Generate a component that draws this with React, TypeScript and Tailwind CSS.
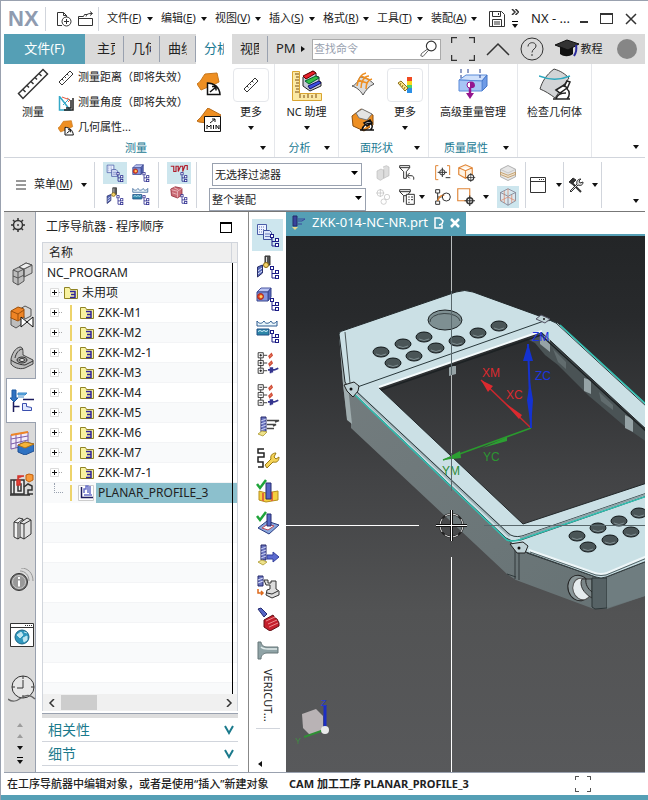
import type { ReactNode } from "react";

type IconProps = { className?: string };

const menus = [
  { label: "文件", hotkey: "F" },
  { label: "编辑", hotkey: "E" },
  { label: "视图", hotkey: "V" },
  { label: "插入", hotkey: "S" },
  { label: "格式", hotkey: "R" },
  { label: "工具", hotkey: "T" },
  { label: "装配", hotkey: "A" },
];

const tabs = ["主页", "几何", "曲线", "分析", "视图"];

const operations = ["ZKK-M1", "ZKK-M2", "ZKK-M2-1", "ZKK-M3", "ZKK-M4", "ZKK-M5", "ZKK-M6", "ZKK-M7", "ZKK-M7-1"];

function Svg({ className = "h-6 w-6", box = "0 0 24 24", children }: IconProps & { box?: string; children: ReactNode }) {
  return (
    <svg viewBox={box} className={`shrink-0 ${className}`} fill="none" stroke="#333" aria-hidden="true">
      {children}
    </svg>
  );
}

function Caret({ className = "" }: IconProps) {
  return (
    <svg viewBox="0 0 6 4" className={`h-1 w-1.5 shrink-0 ${className}`} fill="#111" aria-hidden="true">
      <path d="M0 0h6L3 4z" />
    </svg>
  );
}

// Little hierarchy mark that sits in the corner of all the navigator view icons
function TreeMark({ x = 14, y = 11 }: { x?: number; y?: number }) {
  return (
    <g transform={`translate(${x} ${y})`} stroke="#1c1c86" fill="#fff">
      <path d="M2 4v8h4M2 7.500h4" fill="none" />
      <rect x=".5" y=".5" width="3" height="3" />
      <rect x="5.500" y="4.500" width="3" height="3" />
      <rect x="5.500" y="9.500" width="3" height="3" />
    </g>
  );
}

function ProgramViewIcon({ className }: IconProps) {
  return (
    <Svg className={className}>
      <path d="M1.500 1.500h9v10h-9z" fill="#eef3ff" stroke="#4a5da8" />
      <path d="M3 4h6M3 6.500h6M3 9h6" stroke="#6b7cbf" strokeDasharray="1 1" />
      <path d="M7.500 7.500h6l2 2v7h-8z" fill="#dfe8fb" stroke="#3f519c" />
      <path d="M9 11h5M9 13.500h5" stroke="#6b7cbf" />
      <TreeMark />
    </Svg>
  );
}

function ToolViewIcon({ className }: IconProps) {
  return (
    <Svg className={className}>
      <path d="M9 1h5v9H9z" fill="#555" />
      <path d="M10.500 2v7" stroke="#ddd" />
      <circle cx="10" cy="10" r="2.500" fill="#f4d36b" stroke="#8a6a10" />
      <path d="M1.500 12l5-2v8l-5 4z" fill="#5668b8" stroke="#2a2f66" />
      <path d="M2 16l4-3M2 19l4-3" stroke="#dfe4fa" />
      <TreeMark />
    </Svg>
  );
}

function GeometryViewIcon({ className }: IconProps) {
  return (
    <Svg className={className}>
      <path d="M1 5l4-4h10l-3 4z" fill="#b9c3f2" stroke="#4a56a0" />
      <path d="M12 5l3-4v9l-3 4z" fill="#5767b8" stroke="#3b478e" />
      <path d="M1 5h11v9H1z" fill="#8695dc" stroke="#3b478e" />
      <circle cx="4.500" cy="9.500" r="3" fill="#e2452d" stroke="#a82817" />
      <circle cx="5" cy="9.500" r="1.500" fill="#ffd25a" stroke="none" />
      <TreeMark />
    </Svg>
  );
}

function MethodViewIcon({ className }: IconProps) {
  return (
    <Svg className={className}>
      <path d="M1 2v5h20V2c-2 3-5 3-6 0-2 3-6 3-7 0-2 3-5 3-7 0z" fill="#eaf6fb" stroke="#2c5b90" />
      <path d="M1 10h12v6H1z" fill="#2e87a8" stroke="#1e4f86" />
      <path d="M2 12.500l2-1 2 1 2-1 2 1 2-1" stroke="#d8f3ff" />
      <TreeMark />
    </Svg>
  );
}

function ExpandIcon({ minus }: { minus?: boolean }) {
  return (
    <Svg className="h-6 w-6" box="2 0 28 28">
      {[2, 11, 20].map((y) => (
        <g key={y}>
          <path d={`M4.500 ${y}h6v6h-6z`} fill="#fff" stroke="#222" />
          <path d={minus ? `M6 ${y + 3}h3` : `M6 ${y + 3}h3M7.500 ${y + 1.5}v3`} stroke="#111" />
          <path d={`M11 ${y + 3}h4`} stroke="#222" />
        </g>
      ))}
      <path d="M7.500 8v3M7.500 17v3" stroke="#222" />
      <path d="M17 6l3-3 1 2-3 3zM17 15l3-3 1 2-3 3z" fill="#f2a072" stroke="#d04c38" strokeWidth="1.500" />
      <path d="M16 22h8M19 19v7M21 19v6M24 22l4-2" stroke="#34348e" strokeWidth="2" />
    </Svg>
  );
}

function CutterIcon({ extra }: { extra?: ReactNode }) {
  return (
    <Svg>
      <path d="M5 2h5v15H5z" fill="#6a74bf" stroke="#25296b" />
      <path d="M5 6l5-2M5 9l5-2M5 12l5-2M5 15l5-2" stroke="#c9cff2" />
      {extra}
    </Svg>
  );
}

function WrenchRouteIcon() {
  return (
    <Svg>
      <path d="M8 2H2v4h6v4H2v5h5v5H2" stroke="#222" strokeWidth="1.500" />
      <path d="M9 18l6-6c-1-3 1-6 5-6l-2 4 2 2 3-2c0 4-2 6-6 5l-6 6z" fill="#f5d358" stroke="#9a7b13" />
    </Svg>
  );
}

function VerifyIcon({ block }: { block?: boolean }) {
  return (
    <Svg>
      {block ? (
        <g>
          <path d="M3 12l7 2 12-2v9l-12 2-7-2z" fill="#f4cf3f" stroke="#b78f1c" />
          <path d="M7 14v8M16 13v9" stroke="#e2693a" strokeWidth="2" />
          <path d="M10 4h5v16h-5z" fill="#5666c2" stroke="#262c70" />
        </g>
      ) : (
        <g>
          <path d="M2 17l9-7 12 4-10 9z" fill="#89a7dc" stroke="#2c3c83" />
          <path d="M6 17l6-4 6 2-6 4z" fill="#fff" stroke="#bf4b57" />
          <path d="M11 3h4v12h-4z" fill="#5666c2" stroke="#262c70" />
        </g>
      )}
      <path d="M1 5l3 4 6-8" stroke="#1fa43a" strokeWidth="2.500" />
    </Svg>
  );
}

function MachineIcon() {
  return (
    <Svg>
      <path d="M2 1h5v10H2z" fill="#6a74bf" stroke="#25296b" />
      <path d="M2 5l5-2M2 8l5-2" stroke="#dfe3fa" />
      <path d="M8 5h4v3h3V6h5v8l3 2v4l-7 3-6-3 1-5 3-1v-4h-4z" fill="#ddd" stroke="#333" />
      <path d="M11 18l5 1 6-3" />
      <path d="M2 14v4h5M5 16l2 2-2 2" stroke="#dd6a1c" strokeWidth="1.500" />
    </Svg>
  );
}

function PostIcon() {
  return (
    <Svg>
      <path d="M2 2l3-1 6 6-3 3z" fill="#5565c4" stroke="#262c70" />
      <path d="M8 13l9-5 2 3 2 1 2 4v3l-9 5-6-4z" fill="#c51f2b" stroke="#601016" />
      <path d="M10 14l9-4M12 17l9-4M13 20l9-4" stroke="#ee8a8f" />
    </Svg>
  );
}

function HolderIcon() {
  return (
    <Svg>
      <path d="M2 3h3c0 3 3 5 6 5h11v6H11c-3 0-6 2-6 6H2z" fill="#8fa3a6" stroke="#667678" />
      <path d="M5 8c2 2 4 2 7 2h9" stroke="#e2ecec" strokeWidth="1.500" />
    </Svg>
  );
}

function Ruler({ className }: IconProps) {
  return (
    <Svg className={className} box="0 0 32 32">
      <path d="M1.500 25.500L26 1.500l4.500 4.500L6 30.500z" fill="#fff" strokeWidth="1.500" />
      <path d="M6 21.500l2.500 2.500M10 17.500l2 2M14 13.500l2.500 2.500M18 9.500l2 2M22 5.500l2.500 2.500" strokeWidth="1.500" />
    </Svg>
  );
}

function SmallRuler() {
  return (
    <Svg className="h-4 w-4" box="0 0 16 16">
      <path d="M1 12L12 1l3 3L4 15z" fill="#fff" />
      <path d="M4 9l1.500 1.500M6.500 6.500L8 8M9 4l1.500 1.500" />
    </Svg>
  );
}

function AngleIcon() {
  return (
    <Svg className="h-4 w-4" box="0 0 16 16">
      <path d="M1.500 1v14H12L2 2" stroke="#35a9c8" strokeWidth="1.500" />
      <path d="M15 3v12H6M13 5v8H8" stroke="#222" strokeWidth="1.500" />
      <path d="M4 2l8 3M9 3l3 2-2 2" stroke="#e15b42" />
      <path d="M5 10l6-6" stroke="#35a9c8" />
    </Svg>
  );
}

function SurfaceArcIcon({ className, min }: IconProps & { min?: boolean }) {
  return (
    <Svg className={className}>
      {min ? (
        <g>
          <path d="M0 13C5 9 8 3 11 0l13 7-5 9L2 14z" fill="#ee8f22" stroke="#b86a17" />
          <path d="M7.500 8.500h16v15h-16z" fill="#fff" stroke="#111" />
          <path d="M13 15l5-4M15 11h3v3" stroke="#111" />
          <path d="M10 21v-4l2 2 2-2v4M16.500 17v4M19 21v-4l3 4v-4" stroke="#111" />
        </g>
      ) : (
        <g>
          <path d="M0 12C4 10 6 4 8 2l12-1 2 9-4 2-14 6z" fill="#ee8f22" stroke="#c6771d" />
          <path d="M10.500 22.500V11c6 0 12 4 12.500 11.500z" fill="#fff" stroke="#111" strokeWidth="1.500" />
          <path d="M13 20l6-5M15 14.500h4v4" stroke="#111" strokeWidth="1.500" />
        </g>
      )}
    </Svg>
  );
}

function NcAssistantIcon() {
  return (
    <Svg className="h-8 w-8" box="0 0 32 32">
      <path d="M1.500 1.500h7v22h22v7h-29z" fill="#fbe9a4" stroke="#d9a531" />
      <path d="M4 4h4M5 7h3M4 10h4M5 13h3M4 16h4M5 19h3M4 22h4M9 28v-4M13 28v-3M17 28v-4M21 28v-3M25 28v-4" stroke="#7b4a12" />
      <path d="M12 7l10-6 3 2v3l3 1v4l2 1v4l-11 5-7-5z" fill="#c5c9d6" stroke="#222" />
      <path d="M12 6l10-5 3 2-10 6z" fill="#e8202c" stroke="#600" />
      <path d="M14 11l11-5 3 2-10 6z" fill="#35c044" stroke="#063" />
      <path d="M17 16l11-5 2 2-11 6z" fill="#3c4fe4" stroke="#116" />
    </Svg>
  );
}

function FaceCombIcon() {
  return (
    <Svg>
      <path d="M1 14c4-1 6-5 8-9 5 0 10 3 14 7-5 2-8 6-11 11C9 18 5 15 1 14z" fill="#dcdcdc" stroke="#555" />
      <path d="M6 14c1-7 4-12 9-13M10 16c0-6 3-12 8-12M15 17c0-5 2-9 6-10M7 8l9 3M10 4l9 4" stroke="#ee8f22" strokeWidth="1.500" />
    </Svg>
  );
}

function ReflectionIcon() {
  return (
    <Svg>
      <path d="M1 8l9-7 12 6v10l-9 6L2 18z" fill="#ee8f22" stroke="#8a4d0e" />
      <path d="M5 5l6-4 10 5-5 6-8-2z" fill="#e4e4e4" stroke="#777" />
      <path d="M9 22h14M11 22c1-4 4-7 9-7M13 15l6-3 2 3-5 3zM19 15c3 2 3 5 0 7" fill="#fff" stroke="#111" strokeWidth="1.500" />
    </Svg>
  );
}

function ColorMapIcon() {
  return (
    <Svg className="h-4 w-4" box="0 0 16 16">
      <path d="M10 0h5v4h-5z" fill="#f04a21" stroke="none" />
      <path d="M10 4h5v4h-5z" fill="#f9d71c" stroke="none" />
      <path d="M10 8h5v3h-5z" fill="#4bd16b" stroke="none" />
      <path d="M10 11h5v5h-5z" fill="#2b8fe6" stroke="none" />
      <path d="M1 6l3-2 7 7-3 3z" fill="#ffe98b" stroke="#8c6b13" />
      <path d="M4 6l-1 2M6 8l-1 2M8 10l-1 2" stroke="#8c6b13" />
    </Svg>
  );
}

function WeightIcon() {
  return (
    <Svg className="h-8 w-8" box="0 0 32 32">
      <path d="M2 12l7-5h21l-5 6z" fill="#cfe0fb" stroke="#5b8bd9" />
      <path d="M25 13l5-6v11l-5 5z" fill="#6f9be6" stroke="#4676c8" />
      <path d="M2 12l23 1v10H2z" fill="#a7c5f5" stroke="#5b8bd9" />
      <path d="M4 1v9M11 1v5M23 1v9" stroke="#27408f" strokeDasharray="4 2" />
      <circle cx="13" cy="17" r="3" fill="#fff" stroke="#94158f" />
      <path d="M13 14v6h3a3 3 0 0 0-3-6z" fill="#94158f" stroke="none" />
      <path d="M13 20v7" stroke="#94158f" strokeWidth="2.500" />
      <path d="M9 25h8l-4 6z" fill="#94158f" stroke="none" />
    </Svg>
  );
}

function CheckGeometryIcon() {
  return (
    <Svg className="h-8 w-8" box="0 0 32 32">
      <path d="M1 21c2-7 6-14 14-20 7 2 11 5 15 9-5 6-9 13-14 20C11 26 6 23 1 21z" fill="#d2d4d6" stroke="#444" />
      <path d="M0 8c10 4 19 5 31 0" stroke="#2ba8bf" strokeWidth="1.500" />
      <path d="M14 31h17M17 31c1-4 4-6 10-6M17 22l8-5 3 3-7 5zM25 19l3-6 3 1-3 7c3 2 3 7 0 10" fill="#fff" stroke="#222" strokeWidth="1.500" />
    </Svg>
  );
}

function SolidBlocks() {
  return (
    <Svg>
      <path d="M3 8l6-3 5 2v12l-6 4-5-3z" fill="#bdbdbd" stroke="#555" />
      <path d="M9 5l7-4 6 2v8l-8 4V8z" fill="#c9c9c9" stroke="#555" />
      <path d="M3 8l5 2 14-7M9 5l5 2v8M8 10v13M3 14l5 2 6-3M16 1l-1 5" stroke="#555" />
      <path d="M9 5l7-4 6 2-8 4z" fill="#eee" stroke="#555" />
    </Svg>
  );
}

function ConstraintIcon() {
  return (
    <Svg>
      <path d="M1 12l5-3 6 3v7l-6 4-5-3z" fill="#bdbdbd" stroke="#555" />
      <path d="M10 4l5-3 6 3v7l-6 3z" fill="#d5d5d5" stroke="#555" />
      <path d="M1 6l7-4 6 2v8l-6 4-7-3z" fill="#ee8425" stroke="#9c4f0b" />
      <path d="M1 6l7 3 6-4M8 9v6" stroke="#9c4f0b" />
      <path d="M11 12l12 10V12L11 22z" fill="#fff" stroke="#111" />
    </Svg>
  );
}

function PartIcon() {
  return (
    <Svg>
      <path d="M1 13C2 8 5 2 10 1c3 0 3 3 3 8l10 5v4l-8 4C9 24 3 21 1 18z" fill="#bcbcbc" stroke="#444" />
      <path d="M1 14c5 4 12 5 14 5l8-4M5 12c1-5 4-9 8-9" />
      <ellipse cx="12" cy="14" rx="5" ry="3" fill="#999" />
      <ellipse cx="12" cy="14" rx="2.500" ry="1.500" fill="#eee" />
    </Svg>
  );
}

function OperationNavIcon() {
  return (
    <Svg>
      <path d="M2 1h4v8h2l-4 4-4-4h2z" fill="#2f72c2" stroke="#1f5aa2" />
      <path d="M8 4h9l-2 2H8zM8 8h6" fill="#67b1e6" stroke="#3b87c7" />
      <path d="M3.500 13v10M3.500 17.500h6M13 10.500h11" stroke="#1c1c5e" strokeWidth="1.500" />
      <path d="M12.500 14.500h4v3l5 1v3h-9z" fill="#dfe8ff" stroke="#3a4fae" />
    </Svg>
  );
}

function FeatureNavIcon() {
  return (
    <Svg>
      <path d="M1 4l17-3v13L1 18zM1 8l17-3M1 13l17-4M6 3v14M11 2v13" fill="#f3ecfa" stroke="#7b5ca8" />
      <path d="M1 4l17-3" stroke="#ee8425" strokeWidth="2" />
      <path d="M8 14l7-3 9 2v7l-9 4-7-3z" fill="#2f72c2" stroke="#1f4f92" />
      <path d="M8 14l7-3 9 2-9 4z" fill="#f6b53a" stroke="#b5741a" />
    </Svg>
  );
}

function MachineNavIcon() {
  return (
    <Svg>
      <path d="M1 7h13v14H1zM4 7v14M8 11h3v7H8z" fill="#ececec" strokeWidth="1.500" />
      <path d="M8 6V3h6M7 7h3v5H7z" fill="#e5443a" stroke="#d2352b" strokeWidth="1.500" />
      <path d="M16 2l3-1 4 1v5l-4 2-3-2z" fill="#f79a3b" stroke="#c25f0c" />
      <path d="M14 14l4-3 4 2v4h-4v4h5M0 22h20" strokeWidth="1.500" />
    </Svg>
  );
}

function LibraryIcon() {
  return (
    <Svg>
      <path d="M4 6l5-4 4 1v16l-5 4-4-2z" fill="#f2f2f2" />
      <path d="M10 7l7-5 4 2v14l-7 5-4-2z" fill="#e2e2e2" />
      <path d="M10 7l4 1 7-4M14 8v15M4 6l4 1v16M8 7l5-4" />
    </Svg>
  );
}

function InfoIcon() {
  return (
    <Svg>
      <circle cx="9" cy="14" r="8.500" fill="#777" stroke="#333" />
      <circle cx="9" cy="14" r="6.500" fill="#999" stroke="#ccc" />
      <path d="M9 12.500v6M9 9v2" stroke="#fff" strokeWidth="2" />
      <path d="M10 3c5 0 9 4 9 10M11 0c7 0 12 5 12 13" stroke="#999" />
    </Svg>
  );
}

function BrowserIcon() {
  return (
    <Svg>
      <path d="M.5.5h23v23H.5zM.5 4.500h23" fill="#fff" />
      <path d="M15 2.500h7" strokeDasharray="1 1" />
      <circle cx="12" cy="14" r="7" fill="#2f97bd" stroke="#1b6686" />
      <path d="M7 12l4-3 2 3-3 3zM13 15l4-2v4l-3 2zM14 9l3 1" fill="#bfe7f2" stroke="#bfe7f2" />
    </Svg>
  );
}

function ClockIcon() {
  return (
    <Svg className="h-7 w-7" box="0 0 28 28">
      <circle cx="15" cy="12" r="11" fill="#e6e6e6" />
      <path d="M15 5v8H9M15 1v3M15 20v3M4 12h3M23 12h3" />
      <path d="M0 24c5 4 9 2 13-1s9-4 14 1" stroke="#666" strokeWidth="1.500" />
    </Svg>
  );
}

function FolderIcon() {
  return (
    <Svg className="h-3.5 w-3.5" box="0 0 14 14">
      <path d="M.5 1.500h5l1 2h7v9H.5z" fill="#f8f2a0" stroke="#8f8324" />
      <path d="M6 5.500h5v6H6M7 8.500h4" stroke="#2f249c" strokeWidth="1.500" />
    </Svg>
  );
}

function ProfileIcon() {
  return (
    <Svg className="h-4 w-4" box="0 0 16 16">
      <path d="M.5.5h15v15H.5z" fill="#fff" stroke="#ccc" />
      <path d="M3.500 2v10.500H15" stroke="#1c1c5e" strokeWidth="1.500" />
      <path d="M6 8V4h2V1h2v7M12 1v8M6 10h8" stroke="#6870c8" strokeWidth="1.500" />
    </Svg>
  );
}

function Corners({ className }: IconProps) {
  return (
    <Svg className={className}>
      <path d="M.5 6V.5H6M18 .5h5.500V6M23.500 18v5.500H18M6 23.500H.5V18" strokeWidth="1.500" />
    </Svg>
  );
}

function SelectionIcons() {
  const btn = "flex h-[22px] w-6 items-center justify-center";
  return (
    <div className="flex items-center">
      <div className="grid grid-cols-[24px_36px] gap-y-0.5 pl-0.5">
        <button aria-label="几何体" className={btn}>
          <Svg className="h-4 w-4">
            <path d="M3 9l6-3 4 2v12l-5 3-5-3zM12 3l5-2 4 2v13l-8 4V6" fill="#ddd" stroke="#bbb" />
          </Svg>
        </button>
        <button aria-label="重置过滤器" className={btn}>
          <Svg className="h-4 w-4">
            <path d="M1 1h15v3l-5 6v10H7V10L1 4zM1 4h15" strokeWidth="1.500" />
            <path d="M13 16h5c3 0 5 2 4 6M16 12l-4 4 4 4" strokeWidth="1.500" />
          </Svg>
        </button>
        <button aria-label="捕捉链" className={btn}>
          <Svg className="h-4 w-4">
            <circle cx="8" cy="6" r="5" stroke="#bbb" />
            <path d="M8 0v12M2 6h12" stroke="#bbb" />
            <circle cx="18" cy="12" r="4" stroke="#bbb" />
            <circle cx="13" cy="19" r="4" stroke="#bbb" />
          </Svg>
        </button>
        <button aria-label="过滤器列表" className="flex h-[22px] w-9 items-center gap-1 pl-1">
          <Svg className="h-4 w-4">
            <path d="M1 1h16v3l-5 6H7L1 4zM1 4h16M7 10v10" strokeWidth="1.500" />
            <path d="M11 8h12v15H11zM14 12h2M18 12h3M14 16h2M18 16h3M14 20h2" fill="#fff" strokeWidth="1.500" />
          </Svg>
          <Caret />
        </button>
      </div>
      <div className="grid grid-cols-[24px_36px] gap-y-0.5">
        <button aria-label="捕捉点" className={btn}>
          <Svg className="h-4 w-4">
            <path d="M5 1H1v21h4M18 1h4v14" stroke="#e08434" strokeWidth="1.500" />
            <circle cx="11" cy="11" r="4" strokeWidth="1.500" />
            <path d="M11 4v14M4 11h14M16 19h7" strokeWidth="1.500" />
          </Svg>
        </button>
        <button aria-label="选择对象" className={btn}>
          <Svg className="h-[18px] w-[18px]">
            <path d="M1 5l9-4 9 4v9l-9 5-9-5zM1 5l9 4 9-4M10 9v10" fill="#fff3e4" stroke="#e08434" strokeWidth="1.500" />
            <circle cx="17" cy="18" r="4" fill="#fff" strokeWidth="1.500" />
            <path d="M17 12v12M11 18h12" />
          </Svg>
        </button>
        <button aria-label="选择路径" className={btn}>
          <Svg className="h-4 w-4">
            <path d="M1 1h6v5H1zM1 18h6v5H1zM4 6v12M4 12h6" fill="#fff" strokeWidth="1.500" />
            <path d="M4 18c2-6 5-9 10-9" stroke="#e08434" strokeWidth="2" />
            <circle cx="17" cy="12" r="6" strokeWidth="1.500" />
          </Svg>
        </button>
        <button aria-label="矩形选择" className="flex h-[22px] w-9 items-center gap-2 pl-0.5">
          <Svg className="h-[18px] w-[18px]">
            <path d="M1 1h16v16H1z" stroke="#e08434" strokeWidth="1.500" />
            <circle cx="17" cy="17" r="4" fill="#fff" strokeWidth="2" />
            <path d="M17 10v14M10 17h14" strokeWidth="1.500" />
          </Svg>
          <Caret />
        </button>
      </div>
      <div className="flex flex-col gap-0.5 pl-1.5">
        <button aria-label="截面" className="flex h-[22px] w-[22px] items-center justify-center">
          <Svg className="h-[18px] w-[18px]">
            <path d="M2 7l10-5 10 5v10l-10 5-10-5z" fill="#e6e6e6" stroke="#999" />
            <path d="M2 7l10 5 10-5" stroke="#bbb" />
            <path d="M2 11l10 4 10-4v3l-10 4-10-4z" fill="#efe4d2" stroke="#b98c4f" />
          </Svg>
        </button>
        <button aria-label="着色" className="flex h-[22px] w-[22px] items-center justify-center bg-[#cde6ee]">
          <Svg className="h-[18px] w-[18px]">
            <path d="M2 6l10-5 10 5v11l-10 6-10-6zM2 6l10 5 10-5M12 11v12" fill="#dbe7ee" stroke="#778" />
            <path d="M7 4v16M12 1v9M17 9v11M2 17l10-5 10 5" stroke="#d9886a" />
          </Svg>
        </button>
      </div>
    </div>
  );
}

function TitleBar() {
  return (
    <div className="flex h-[33px] items-center pt-0.5">
      <span className="flex h-6 w-[42px] items-center border-r border-gray-300 pl-1 font-['Liberation_Sans',Arial,sans-serif] text-[22px] font-bold text-[#8f9bb0]">
        NX
      </span>
      <div className="flex h-6 w-[53px] items-center justify-between border-r border-gray-300 pr-1 pl-2.5">
        <button aria-label="新建">
          <Svg className="h-4 w-4" box="0 0 16 16">
            <path d="M6 14.500H1.500V1.500h6l3 3V6M7.500 1.500v3h3" />
            <circle cx="10.500" cy="10.500" r="4.500" />
            <path d="M10.500 8v5M8 10.500h5" />
          </Svg>
        </button>
        <button aria-label="打开">
          <Svg className="h-4 w-4" box="0 0 16 16">
            <path d="M.5 14.500v-9h5l1-2h3M.5 7.500h14v7H.5M8 5.500c1-3 3-3 6-3M12 .5l2.500 2L12 4.500" />
          </Svg>
        </button>
      </div>
      <nav className="flex pl-2">
        {menus.map((m) => (
          <button key={m.hotkey} className="flex w-[54px] shrink-0 items-center justify-between pr-2 text-[11px] whitespace-nowrap">
            <span>
              {m.label}(<u>{m.hotkey}</u>)
            </span>
            <Caret />
          </button>
        ))}
      </nav>
      <button aria-label="保存" className="ml-1">
        <Svg className="h-4 w-4" box="0 0 16 16">
          <path d="M.5.5h12l3 3v12H.5zM3.500.5v5h8v-5M3.500 15.500v-7h9v7M5 11h6M5 13h6M9.500 2v2" />
        </Svg>
      </button>
      <button aria-label="更多命令" className="ml-1.5 flex flex-col items-center gap-1.5">
        <Svg className="h-1.5 w-2" box="0 0 8 6">
          <path d="M1 0l3 3-3 3M4.500 0l3 3-3 3" strokeWidth="1.500" />
        </Svg>
        <span className="border-t border-black pt-0.5">
          <Caret />
        </span>
      </button>
      <span className="ml-3 text-[13px] whitespace-nowrap">NX - ...</span>
      <div className="mr-2 ml-auto flex items-center gap-3">
        <button aria-label="最小化" className="flex h-4 w-2 items-end pb-1">
          <span className="h-0.5 w-2 bg-[#333]" />
        </button>
        <button aria-label="最大化" className="h-[11px] w-[13px] border border-t-2 border-[#333]" />
        <button aria-label="关闭">
          <Svg className="h-3 w-3" box="0 0 12 12">
            <path d="M1 1l10 10M11 1L1 11" strokeWidth="1.500" />
          </Svg>
        </button>
      </div>
    </div>
  );
}

function TabBar() {
  return (
    <div className="flex h-[30px] items-center bg-[#dadada] text-[13px]">
      <button className="h-full w-[81px] shrink-0 bg-[#559fb5] text-white">文件(F)</button>
      {tabs.map((t) => (
        <button
          key={t}
          className={
            t === "分析"
              ? "h-full w-9 shrink-0 overflow-hidden bg-white px-2 text-left whitespace-nowrap text-[#1b7a93]"
              : "h-[26px] w-9 shrink-0 overflow-hidden border-r border-gray-400 px-2 text-left whitespace-nowrap nth-[2]:w-[39px] nth-[2]:pl-3"
          }
        >
          <span className="block overflow-hidden">{t}</span>
        </button>
      ))}
      <button className="w-7 shrink-0 overflow-hidden pl-2 text-left">
        <span className="block overflow-hidden">PMI</span>
      </button>
      <button aria-label="更多选项卡" className="ml-1 w-3 shrink-0">
        <Caret className="-rotate-90" />
      </button>
      <label className="flex h-[21px] w-[129px] shrink-0 items-center border border-[#aaa] bg-white">
        <input aria-label="查找命令" placeholder="查找命令" className="w-[107px] min-w-0 px-px text-[11px] outline-none placeholder:text-gray-400" />
        <Svg className="h-[18px] w-[18px]">
          <circle cx="15" cy="8" r="6.500" fill="#fff" strokeWidth="1.500" />
          <path d="M10 12l1.500 1.500L4 22l-3-1 1-3z" />
        </Svg>
      </label>
      <div className="flex flex-1 items-center justify-between pr-2 pl-2.5">
        <button aria-label="全屏">
          <Corners className="h-6 w-6" />
        </button>
        <button aria-label="最小化功能区">
          <Svg className="h-6 w-6">
            <path d="M1 18L12 7l11 11" strokeWidth="1.500" />
          </Svg>
        </button>
        <button aria-label="帮助">
          <Svg className="h-6 w-6">
            <circle cx="12" cy="12" r="11" />
            <path d="M8 9.500c0-5 8-5 8-.5 0 3-4 3-4 6.500M12 17v2" />
          </Svg>
        </button>
        <button className="flex items-center gap-0.5 text-[11px]">
          <Svg className="h-6 w-6">
            <path d="M5 9v8c4 3 9 3 13 0V9z" fill="#111" stroke="none" />
            <path d="M0 8l12-5 12 4-11 6z" fill="#333" stroke="#111" />
            <path d="M21 8c1 5 0 8-2 11" stroke="#2b2b9e" strokeWidth="2" />
          </Svg>
          教程
        </button>
        <button aria-label="用户" className="ml-1 h-5 w-5 rounded-full bg-[#868686]" />
      </div>
    </div>
  );
}

function Group({ className, label, children, more = true }: { className: string; label?: string; children: ReactNode; more?: boolean }) {
  return (
    <section className={`flex shrink-0 flex-col border-r border-gray-200 pt-1 ${className}`}>
      <div className="flex flex-1">{children}</div>
      <div className="flex h-[18px] items-center text-[11px] text-[#1b7a93]">
        <span className="flex-1 text-center">{label}</span>
        {more && <Caret className="mr-2" />}
      </div>
    </section>
  );
}

function MoreButton({ children }: { children: ReactNode }) {
  return (
    <button className="flex w-9 flex-col items-center text-[11px]">
      <span className="flex h-[34px] w-9 items-center justify-center rounded border border-gray-200">{children}</span>
      <span className="mt-0.5 leading-4">更多</span>
      <Caret className="mt-1.5" />
    </button>
  );
}

function Ribbon() {
  return (
    <div className="flex h-[94px] border-b border-gray-300">
      <Group label="测量" className="w-[271px] pl-2">
        <button className="flex w-[42px] flex-col items-center text-[11px]">
          <Ruler className="h-8 w-8" />
          <span className="mt-1 leading-4">测量</span>
        </button>
        <div className="flex w-[139px] flex-col pl-1 text-[11px]">
          <button className="flex h-[23px] items-center gap-1 pb-1 whitespace-nowrap">
            <SmallRuler />
            测量距离（即将失效）
          </button>
          <button className="flex h-[23px] items-center gap-1 whitespace-nowrap">
            <AngleIcon />
            测量角度（即将失效）
          </button>
          <button className="flex h-[23px] items-center gap-1 pt-1 whitespace-nowrap">
            <SurfaceArcIcon className="h-4 w-4" />
            几何属性...
          </button>
        </div>
        <div className="flex flex-col gap-3 pt-1 pl-1">
          <button aria-label="最小半径">
            <SurfaceArcIcon />
          </button>
          <button aria-label="最小值">
            <SurfaceArcIcon min />
          </button>
        </div>
        <div className="pl-3">
          <MoreButton>
            <SmallRuler />
          </MoreButton>
        </div>
      </Group>
      <Group label="分析" className="w-16">
        <button className="flex flex-1 flex-col items-center pt-0.5 text-[11px]">
          <NcAssistantIcon />
          <span className="mt-0.5 leading-4">NC 助理</span>
          <Caret className="mt-1.5" />
        </button>
      </Group>
      <Group label="面形状" className="w-[90px]">
        <div className="flex flex-col gap-3 pt-1 pl-3">
          <button aria-label="曲率梳">
            <FaceCombIcon />
          </button>
          <button aria-label="反射">
            <ReflectionIcon />
          </button>
        </div>
        <div className="pl-3">
          <MoreButton>
            <ColorMapIcon />
          </MoreButton>
        </div>
      </Group>
      <Group label="质量属性" className="w-[89px]">
        <button className="flex flex-1 flex-col items-center text-[11px] whitespace-nowrap">
          <WeightIcon />
          <span className="mt-1 leading-4">高级重量管理</span>
        </button>
      </Group>
      <Group more={false} className="w-[74px]">
        <button className="flex flex-1 flex-col items-center text-[11px] whitespace-nowrap">
          <CheckGeometryIcon />
          <span className="mt-1 leading-4">检查几何体</span>
        </button>
      </Group>
      <button aria-label="功能区选项" className="flex flex-1 items-end justify-end border-gray-200 pr-1.5 pb-2">
        <Caret />
      </button>
    </div>
  );
}

function Filter({ label, options, className }: { label: string; options: string[]; className: string }) {
  return (
    <div className={`relative h-[23px] ${className}`}>
      <select aria-label={label} className="h-full w-full appearance-none border border-gray-400 bg-white pl-0.5 text-[11px]">
        {options.map((o) => (
          <option key={o}>{o}</option>
        ))}
      </select>
      <svg viewBox="0 0 7 4" className="pointer-events-none absolute top-2.5 right-1 h-1 w-[7px]" aria-hidden="true">
        <path d="M0 0h7L3.500 4z" />
      </svg>
    </div>
  );
}

function Toolbar() {
  const cell = "flex h-[22px] w-6 items-center justify-center";
  return (
    <div className="flex h-[54px] items-center border-b border-[#777]">
      <button className="flex h-[46px] w-[91px] shrink-0 items-center border-r border-gray-300 pl-3 text-[11px]">
        <Svg className="mr-2 h-2.5 w-2.5" box="0 0 10 10">
          <path d="M0 1h10M0 5h10M0 9h10" />
        </Svg>
        菜单(<u>M</u>)
        <Caret className="ml-2" />
      </button>
      <div className="grid h-[46px] w-16 shrink-0 grid-cols-2 gap-x-0.5 border-r border-gray-300 pr-1.5 pl-2">
        <button aria-label="程序顺序视图" className={`${cell} bg-[#cde6ee]`}>
          <ProgramViewIcon className="h-[18px] w-[18px]" />
        </button>
        <button aria-label="几何视图" className={cell}>
          <GeometryViewIcon className="h-[18px] w-[18px]" />
        </button>
        <button aria-label="机床视图" className={cell}>
          <ToolViewIcon className="h-[18px] w-[18px]" />
        </button>
        <button aria-label="加工方法视图" className={cell}>
          <MethodViewIcon className="h-[18px] w-[18px]" />
        </button>
      </div>
      <div className="flex h-[46px] w-[38px] shrink-0 flex-col border-r border-gray-300 pl-2">
        <button aria-label="刀轨" className={`${cell} bg-[#cde6ee]`}>
          <Svg className="h-[18px] w-[18px]">
            <path d="M1 3h4v7h3V3h3v7l3-7h3v7l3-8h3v6" stroke="#b01c2a" strokeWidth="1.500" />
            <TreeMark x={14} y={11} />
          </Svg>
        </button>
        <button aria-label="工件" className={cell}>
          <Svg className="h-[18px] w-[18px]">
            <path d="M1 4l6-3 9 2v9l-6 4-8-3z" fill="#c96a74" stroke="#8e2330" />
            <path d="M2 5l8 2 6-4M10 7v8M3 9l6 2M5 2l6 3" stroke="#f0c6ca" />
            <TreeMark x={14} y={11} />
          </Svg>
        </button>
      </div>
      <div className="flex w-[172px] shrink-0 flex-col gap-0.5 pl-3">
        <Filter label="类型过滤器" className="ml-[3px] w-[150px]" options={["无选择过滤器", "面", "边"]} />
        <Filter label="选择范围" className="w-[157px]" options={["整个装配", "仅在工作部件内"]} />
      </div>
      <SelectionIcons />
      <button aria-label="窗口" className="ml-1.5 flex h-[46px] w-[38px] shrink-0 items-center gap-2.5 border-l border-gray-300 pl-1">
        <Svg className="h-4 w-4" box="0 0 16 16">
          <path d="M.5.5h15v15H.5zM.5 4.500h15" />
          <path d="M9 2.500h5" strokeDasharray="1 1" />
        </Svg>
        <Caret />
      </button>
      <button aria-label="工具" className="flex h-[46px] w-[39px] shrink-0 items-center gap-2 border-x border-gray-300 pl-1">
        <Svg className="h-4 w-4" box="0 0 16 16">
          <path d="M4 6l9 9" strokeWidth="2" />
          <path d="M1 5l4-4 3 2-4 4z" fill="#333" />
          <path d="M2 14l7-7c-1-3 1-5 4-5l-2 2 1 2 3-1c0 3-2 4-5 3l-7 7z" fill="#ddd" />
        </Svg>
        <Caret />
      </button>
      <button aria-label="工具条选项" className="ml-auto self-end pr-1.5 pb-2">
        <Caret />
      </button>
    </div>
  );
}

const resources = [
  { label: "装配导航器", size: "h-11", icon: <SolidBlocks /> },
  { label: "约束导航器", size: "h-[42px]", icon: <ConstraintIcon /> },
  { label: "部件导航器", size: "h-10", icon: <PartIcon /> },
  { label: "工序导航器", size: "h-[45px]", icon: <OperationNavIcon />, active: true },
  { label: "加工特征导航器", size: "h-10", icon: <FeatureNavIcon /> },
  { label: "机床导航器", size: "h-11", icon: <MachineNavIcon /> },
  { label: "重用库", size: "h-[42px]", icon: <LibraryIcon /> },
  { label: "信息", size: "h-[62px]", icon: <InfoIcon /> },
  { label: "浏览器", size: "h-12", icon: <BrowserIcon /> },
  { label: "历史记录", size: "h-[60px]", icon: <ClockIcon /> },
];

function ResourceBar() {
  return (
    <aside className="flex w-8 shrink-0 flex-col border-r border-gray-400 bg-[#dadada]">
      <button aria-label="设置" className="flex h-10 justify-center pt-1.5 pr-1">
        <Svg className="h-3.5 w-3.5" box="0 0 14 14">
          <circle cx="7" cy="7" r="4.500" strokeWidth="1.500" />
          <path d="M7 0v3M7 11v3M0 7h3M11 7h3M2 2l2 2M10 10l2 2M12 2l-2 2M4 10l-2 2" strokeWidth="1.500" />
          <circle cx="7" cy="7" r=".5" fill="#333" />
        </Svg>
      </button>
      {resources.map((r) => (
        <button
          key={r.label}
          aria-label={r.label}
          className={`${r.size} flex shrink-0 items-center justify-center ${r.active ? "-mr-px ml-0.5 border-y border-l border-gray-400 bg-white" : "pl-1"}`}
        >
          {r.icon}
        </button>
      ))}
      <div className="flex flex-1 flex-col items-center justify-between pt-1 pb-2">
        <Caret className="rotate-180 opacity-30" />
        <Caret className="rotate-180 opacity-30" />
        <Caret />
        <span className="border-t border-black pt-0.5">
          <Caret />
        </span>
      </div>
    </aside>
  );
}

function Expander() {
  return (
    <button aria-label="展开" className="flex h-5 w-5 items-center justify-end">
      <Svg className="h-[9px] w-[13px]" box="0 0 13 9">
        <path d="M.5.5h8v8h-8z" fill="#fff" stroke="#ddd" />
        <path d="M2 4.500h5M4.500 2v5" stroke="#111" />
        <path d="M9 4.500h4" stroke="#aaa" strokeDasharray="1 1" />
      </Svg>
    </button>
  );
}

function Navigator() {
  return (
    <div className="flex w-[213px] shrink-0 flex-col border-r border-[#888]">
      <div className="flex h-[30px] items-center justify-between pr-4 pl-2.5 text-[12px]">
        工序导航器 - 程序顺序
        <button aria-label="最大化面板" className="h-[11px] w-3 border border-t-2 border-black" />
      </div>
      <div className="mr-2.5 ml-1.5 flex min-h-0 flex-1 flex-col border border-b-0 border-gray-300">
        <div className="flex h-5 shrink-0 items-center border-b border-gray-300 bg-[#efefef] pl-1.5 text-[12px]">
          <span className="flex h-full w-[183px] items-center border-r border-gray-300">名称</span>
        </div>
        <div className="relative min-h-0 flex-1 overflow-hidden text-[12px]">
          <ul role="tree" aria-label="程序顺序">
            <li role="treeitem" className="h-5 border-b border-gray-100 pl-1 leading-5">
              NC_PROGRAM
            </li>
            <li role="treeitem" className="flex h-5 items-center border-b border-gray-100 bg-gray-50">
              <Expander />
              <span className="mr-1 ml-px">
                <FolderIcon />
              </span>
              未用项
            </li>
            {operations.map((name, i) => (
              <li key={name} role="treeitem" className={`flex h-5 items-center border-b border-gray-100 ${i % 2 ? "bg-gray-50" : "bg-white"}`}>
                <Expander />
                <span className="mr-2 ml-[7px] h-4 w-0.5 bg-[#edd36a]" />
                <FolderIcon />
                <span className="ml-1">{name}</span>
              </li>
            ))}
            <li role="treeitem" aria-selected="true" className="flex h-5 items-center bg-gray-50">
              <span className="ml-[11px] h-2.5 w-[9px] self-start border-b border-l border-dotted border-gray-400" />
              <span className="mr-1.5 ml-[7px] h-4 w-0.5 bg-[#edd36a]" />
              <ProfileIcon />
              <span className="ml-0.5 h-full flex-1 bg-[#8cc0cd] pl-0.5 leading-5">PLANAR_PROFILE_3</span>
            </li>
            {Array.from({ length: 40 }, (_, i) => (
              <li key={i} role="presentation" className={`h-5 border-b border-gray-100 ${i % 2 ? "bg-gray-50" : "bg-white"}`} />
            ))}
          </ul>
          <span className="absolute inset-y-0 left-[189px] w-px bg-black" />
        </div>
        <div className="flex h-[17px] shrink-0 items-center bg-[#f0f0f0]">
          <button aria-label="向左滚动" className="flex w-[18px] justify-center">
            <Svg className="h-2 w-2" box="0 0 8 8">
              <path d="M6 0L2 4l4 4" strokeWidth="1.500" />
            </Svg>
          </button>
          <span className="h-[15px] w-9 bg-[#cdcdcd]" />
          <button aria-label="向右滚动" className="ml-auto flex w-4 justify-center">
            <Svg className="h-2 w-2" box="0 0 8 8">
              <path d="M2 0l4 4-4 4" strokeWidth="1.500" />
            </Svg>
          </button>
        </div>
      </div>
      <div className="mt-0.5 mr-2.5 ml-1.5 h-[5px] border-t border-gray-400 bg-[#ddd]" />
      {["相关性", "细节"].map((t) => (
        <button key={t} className="mr-2.5 ml-1.5 flex h-6 items-center justify-between border-b border-gray-300 pr-1 pl-1.5 text-[14px] text-[#1b7a8c]">
          {t}
          <Svg className="h-2.5 w-2.5" box="0 0 10 10">
            <path d="M1 1l4 7 4-7" stroke="#1b7a8c" strokeWidth="2" />
          </Svg>
        </button>
      ))}
      <div className="h-1.5" />
    </div>
  );
}

const actions = [
  { label: "程序顺序视图", icon: <ProgramViewIcon /> },
  { label: "机床视图", icon: <ToolViewIcon /> },
  { label: "几何视图", icon: <GeometryViewIcon /> },
  { label: "加工方法视图", icon: <MethodViewIcon /> },
  { label: "全部展开", icon: <ExpandIcon /> },
  { label: "全部折叠", icon: <ExpandIcon minus /> },
  {
    label: "创建工序",
    icon: (
      <CutterIcon
        extra={
          <g>
            <path d="M2 19l4-3 5 1-4 4z" fill="#eee28a" stroke="#bba94a" />
            <path d="M11 5.500h12L19 7M11 9.500h9L17 11M11 13.500h7" stroke="#444" strokeWidth="1.500" />
          </g>
        }
      />
    ),
  },
  { label: "编辑刀轨", icon: <WrenchRouteIcon /> },
  { label: "确认刀轨", icon: <VerifyIcon block /> },
  { label: "过切检查", icon: <VerifyIcon /> },
  {
    label: "移动刀具",
    icon: (
      <CutterIcon
        extra={
          <g>
            <path d="M2 19l4-2 5 2-4 3z" fill="#eee28a" stroke="#bba94a" />
            <path d="M11 12h6V9l6 5-6 5v-3h-6z" fill="#5b6bd0" stroke="#34409c" />
          </g>
        }
      />
    ),
  },
  { label: "机床仿真", icon: <MachineIcon /> },
  { label: "后处理", icon: <PostIcon /> },
  { label: "刀柄", icon: <HolderIcon /> },
];

function ActionBar() {
  return (
    <aside className="flex w-[37px] shrink-0 flex-col items-center pt-[7px]">
      {actions.map((a, i) => (
        <button key={a.label} aria-label={a.label} className={`flex h-8 w-[31px] shrink-0 items-center justify-center ${i === 0 ? "bg-[#cde6ee]" : ""}`}>
          {a.icon}
        </button>
      ))}
      <button className="mt-0.5 w-6 border-b border-gray-300 pb-1.5 text-[11px] leading-6 [writing-mode:vertical-rl]">VERICUT...</button>
      <button aria-label="收起" className="mt-auto mr-4 pb-1.5">
        <Caret className="rotate-90" />
      </button>
    </aside>
  );
}

const upperHoles = [[381, 351], [403, 343], [424, 336], [393, 362], [414, 355], [436, 347], [457, 340], [478, 332], [499, 325]];
const lowerHoles = [[577, 535], [598, 527], [619, 520], [639, 512], [588, 546], [610, 539], [631, 531]];

function Model() {
  return (
    <svg viewBox="286 235 359 537" preserveAspectRatio="xMinYMin slice" className="h-full w-full" fill="none" role="img" aria-label="ZKK-014-NC-NR">
      <defs>
        <linearGradient id="sky" gradientUnits="userSpaceOnUse" x1="0" y1="235" x2="0" y2="772">
          <stop offset="0" stopColor="#232527" />
          <stop offset=".15" stopColor="#282a2c" />
          <stop offset=".45" stopColor="#424345" />
          <stop offset=".7" stopColor="#525354" />
          <stop offset="1" stopColor="#58595b" />
        </linearGradient>
        <linearGradient id="side" x1="0" y1="0" x2="1" y2="1">
          <stop offset="0" stopColor="#747d7f" />
          <stop offset="1" stopColor="#667274" />
        </linearGradient>
      </defs>
      <rect x="286" y="235" width="2000" height="2000" fill="url(#sky)" />

      {/* side walls */}
      <path d="M339 333l4 50 4 34 4 4v6l156 146 9 6 78 29h13l38-13V545L530 540 350 380z" fill="url(#side)" />
      <path d="M339 333l4 50 4 36 5 4-4-38-6-52z" fill="#a0adaf" />
      <path d="M515 549v29M519 551v28M507 573l9 3" stroke="#30393b" />

      {/* bore in the front wall */}
      <ellipse cx="579" cy="587" rx="11" ry="13" transform="rotate(-18 579 587)" fill="#8b9799" stroke="#222" />
      <ellipse cx="582" cy="588" rx="9" ry="11" transform="rotate(-18 582 588)" fill="#e6ecee" stroke="#555" />
      <path d="M582 578c-3 6 1 14 10 19v-19z" fill="#7b8688" stroke="#333" />
      <path d="M586 578c-1 5 2 10 6 13" stroke="#222" />
      <path d="M592 577h15v30l-12 1-3-2z" fill="#57636500" />
      <path d="M592 577h15v30l-12 1-3-2z" fill="#566265" stroke="#2b3436" />
      <path d="M607 577l38-16v34l-38 12z" fill="#6f7d80" />

      {/* top face with the pocket cut out */}
      <path
        fillRule="evenodd"
        d="M339 333q0-3 6-4l111-38q9-3 17 0l69 25 16 6 89 81v93l-131 44 11 12 69 24q5 1 10 0l41-16v-65L514 541l-8-4-156-148-5-8zM379 387l144 136 124-41v-53L541 331z"
        fill="#cbe0e5"
        stroke="#23292b"
        strokeWidth="1"
      />
      <path d="M509 540l12-1 126-44v65l-41 16q-5 2-10 0l-70-25-9-5z" fill="#c9e0e5" stroke="#333c3e" />
      <path d="M345 331l5 51" stroke="#4c5759" />
      <path d="M356 388q2-3 7-4l181-64q7-2 12 2l91 84" stroke="#29383b" />
      <path d="M357 392l153 143" stroke="#a3b6bb" strokeWidth="3" />
      <path d="M356 390l152 142q5 5 14 3l125-43" stroke="#2b383b" />
      <path d="M520 537l127-44" stroke="#8ea2a7" strokeWidth="2" />
      <path d="M529 549l66 23q6 2 12 0l40-17" stroke="#eef6f8" strokeWidth="2" />
      <path d="M530 551l66 23q5 1 10 0l41-17" stroke="#536265" />
      <path d="M379 386l163-56" stroke="#f5fbfc" strokeWidth="2" />

      {/* inner wall and ribs along the far edge */}
      <path d="M527 338l14-6 106 98v11l-19-13-39-33-31-31-13-10-10-12z" fill="#4a5355" />
      <path d="M540 333l10 5v13l-10-8zM584 377l7 2v14l-7-3zM625 414l8 4v13l-8-4zM449 365h7v8l-7 2z" fill="#96a3a6" />
      <path d="M553 348l13 13v7l-8-7zM599 391l14 13v5l-12-9z" fill="#77858780" />
      <path d="M381 389l160-55 106 97" stroke="#1d2224" strokeWidth="1.500" />
      <path d="M353 392l154 147q5 2 12 0l128-44M560 324l87 80" stroke="#2fbfb0" strokeWidth="1.500" />

      {/* corner lugs */}
      <path d="M344 384l10-3 5 4-1 5-5 6-6-6z" fill="#bfd2d6" stroke="#222" />
      <path d="M510 543l13-2 5 4-3 7h-8z" fill="#bfd2d6" stroke="#222" />
      <path d="M536 318l5-4 9 4-5 4z" fill="#bfd2d6" stroke="#556" />
      <circle cx="351" cy="388" r="1.500" fill="#111" />
      <circle cx="519" cy="547" r="1.500" fill="#111" />
      <circle cx="544" cy="318" r="1" fill="#111" />

      <ellipse cx="445" cy="319" rx="17" ry="10" fill="#7e8f92" stroke="#1f2527" />
      <path d="M430 321a15 8 0 0 1 30-1" stroke="#3c4648" />
      {[...upperHoles, ...lowerHoles].map(([cx, cy]) => (
        <g key={`${cx}-${cy}`}>
          <ellipse cx={cx} cy={cy} rx="8" ry="5" fill="#4a5557" stroke="#12181a" />
          <path d={`M${cx - 5} ${cy + 2}q5 3 10 0`} stroke="#7d8c8f" />
        </g>
      ))}

      {/* work and machine axes */}
      <g fontFamily="Liberation Sans, Arial, sans-serif" fontSize="12">
        <path d="M531 427L481 379" stroke="#c8282e" strokeWidth="1.500" />
        <path d="M481 379l12 6-5 6zM505 402l17 12-3 4z" fill="#dc2a2f" />
        <path d="M531 427l-88 32" stroke="#2a9a2e" strokeWidth="1.500" />
        <path d="M443 459l17-9 1 7zM482 447l25-11v4z" fill="#2ca032" />
        <path d="M531 427l-3-84" stroke="#1733cc" strokeWidth="2" />
        <path d="M528 343l5 17h-10zM530 381l3 18-2 28-4-28z" fill="#1432d2" />
        <text x="482" y="376" fill="#dc2a2f">XM</text>
        <text x="506" y="398" fill="#dc2a2f">XC</text>
        <text x="483" y="460" fill="#2c9632">YC</text>
        <text x="442" y="474" fill="#2c8a32">YM</text>
        <text x="532" y="340" fill="#1c35e0">ZM</text>
        <text x="535" y="379" fill="#1c35e0">ZC</text>
      </g>

      {/* cursor */}
      <path d="M451.500 235v55M451.500 374v78" stroke="#b9bcbd" />
      <path d="M451.500 290v84M451.500 452v38M484 524.500h161" stroke="#59686c" />
      <path d="M286 524.500h133M451.500 556v216" stroke="#fff" />
      <circle cx="451.500" cy="524.500" r="11.500" stroke="#222" strokeWidth="2" />
      <circle cx="451.500" cy="524.500" r="11.500" stroke="#ddd" strokeDasharray="14 4" strokeDashoffset="7" />
      <path d="M451.500 509v31M436 524.500h31" stroke="#111" strokeWidth="3" />
      <path d="M451.500 509v31M436 524.500h31" stroke="#fff" />

      {/* view triad */}
      <path d="M302 713l14-5 7 7v14l-13 5-7-7z" fill="#b9b3b5" />
      <path d="M325 728v-24" stroke="#1c2ec4" strokeWidth="3" />
      <path d="M324 729l-20 7" stroke="#2f8f35" strokeWidth="2" />
      <circle cx="325" cy="729" r="4" fill="#e9eaea" />
      <text x="321" y="705" fontFamily="Liberation Sans, Arial, sans-serif" fontSize="9" fill="#2438d8">Z</text>
      <text x="295" y="743" fontFamily="Liberation Sans, Arial, sans-serif" fontSize="9" fill="#3f8a44">Y</text>
    </svg>
  );
}

function Viewport() {
  return (
    <main className="flex min-w-0 flex-1 flex-col">
      <div className="flex h-6 shrink-0 border-b-2 border-[#559fb5]">
        <div className="flex items-center bg-[#559fb5] pr-1.5 pl-1 text-[13px] text-white">
          <Svg className="mr-1.5 h-4 w-4" box="0 0 16 16">
            <path d="M3 1h4v10H3z" fill="#39459c" stroke="#252b6b" />
            <path d="M8 4h7l-3 2H8M8 9h4" stroke="#39459c" />
            <path d="M2 12h6l-3 3z" fill="#e8d98c" stroke="none" />
          </Svg>
          ZKK-014-NC-NR.prt
          <Svg className="ml-1.5 h-3 w-2.5" box="0 0 10 12">
            <path d="M6 1H1v10h7V8M6 1l3 3-1 3-3 1" stroke="#fff" strokeWidth="1.500" />
          </Svg>
          <button aria-label="关闭部件" className="ml-1.5">
            <Svg className="h-2.5 w-2.5" box="0 0 10 10">
              <path d="M1 1l8 8M9 1L1 9" stroke="#fff" strokeWidth="2.500" />
            </Svg>
          </button>
        </div>
      </div>
      <div className="min-h-0 flex-1 overflow-hidden bg-[#58595b]">
        <Model />
      </div>
    </main>
  );
}

export default function App() {
  return (
    <div className="flex h-screen flex-col overflow-hidden border-t border-l border-gray-400 bg-white font-['Noto_Sans','Noto_Sans_CJK_SC',sans-serif] text-[#222]">
      <div className="flex min-h-0 flex-1 flex-col pr-[3px] pl-[3px]">
        <TitleBar />
        <TabBar />
        <Ribbon />
        <Toolbar />
        <div className="flex min-h-0 flex-1 border-b border-gray-400">
          <ResourceBar />
          <Navigator />
          <ActionBar />
          <Viewport />
        </div>
        <footer className="flex h-[22px] shrink-0 items-center pl-[3px] text-[11px] whitespace-nowrap">
          <span className="w-[282px] font-medium">在工序导航器中编辑对象，或者是使用“插入”新建对象</span>
          <span className="font-bold">CAM 加工工序 PLANAR_PROFILE_3</span>
          <button aria-label="全屏显示" className="mr-[54px] ml-auto">
            <Corners className="h-4 w-4" />
          </button>
        </footer>
      </div>
      <div className="h-[5px] shrink-0 bg-[#559fb5]" />
    </div>
  );
}
